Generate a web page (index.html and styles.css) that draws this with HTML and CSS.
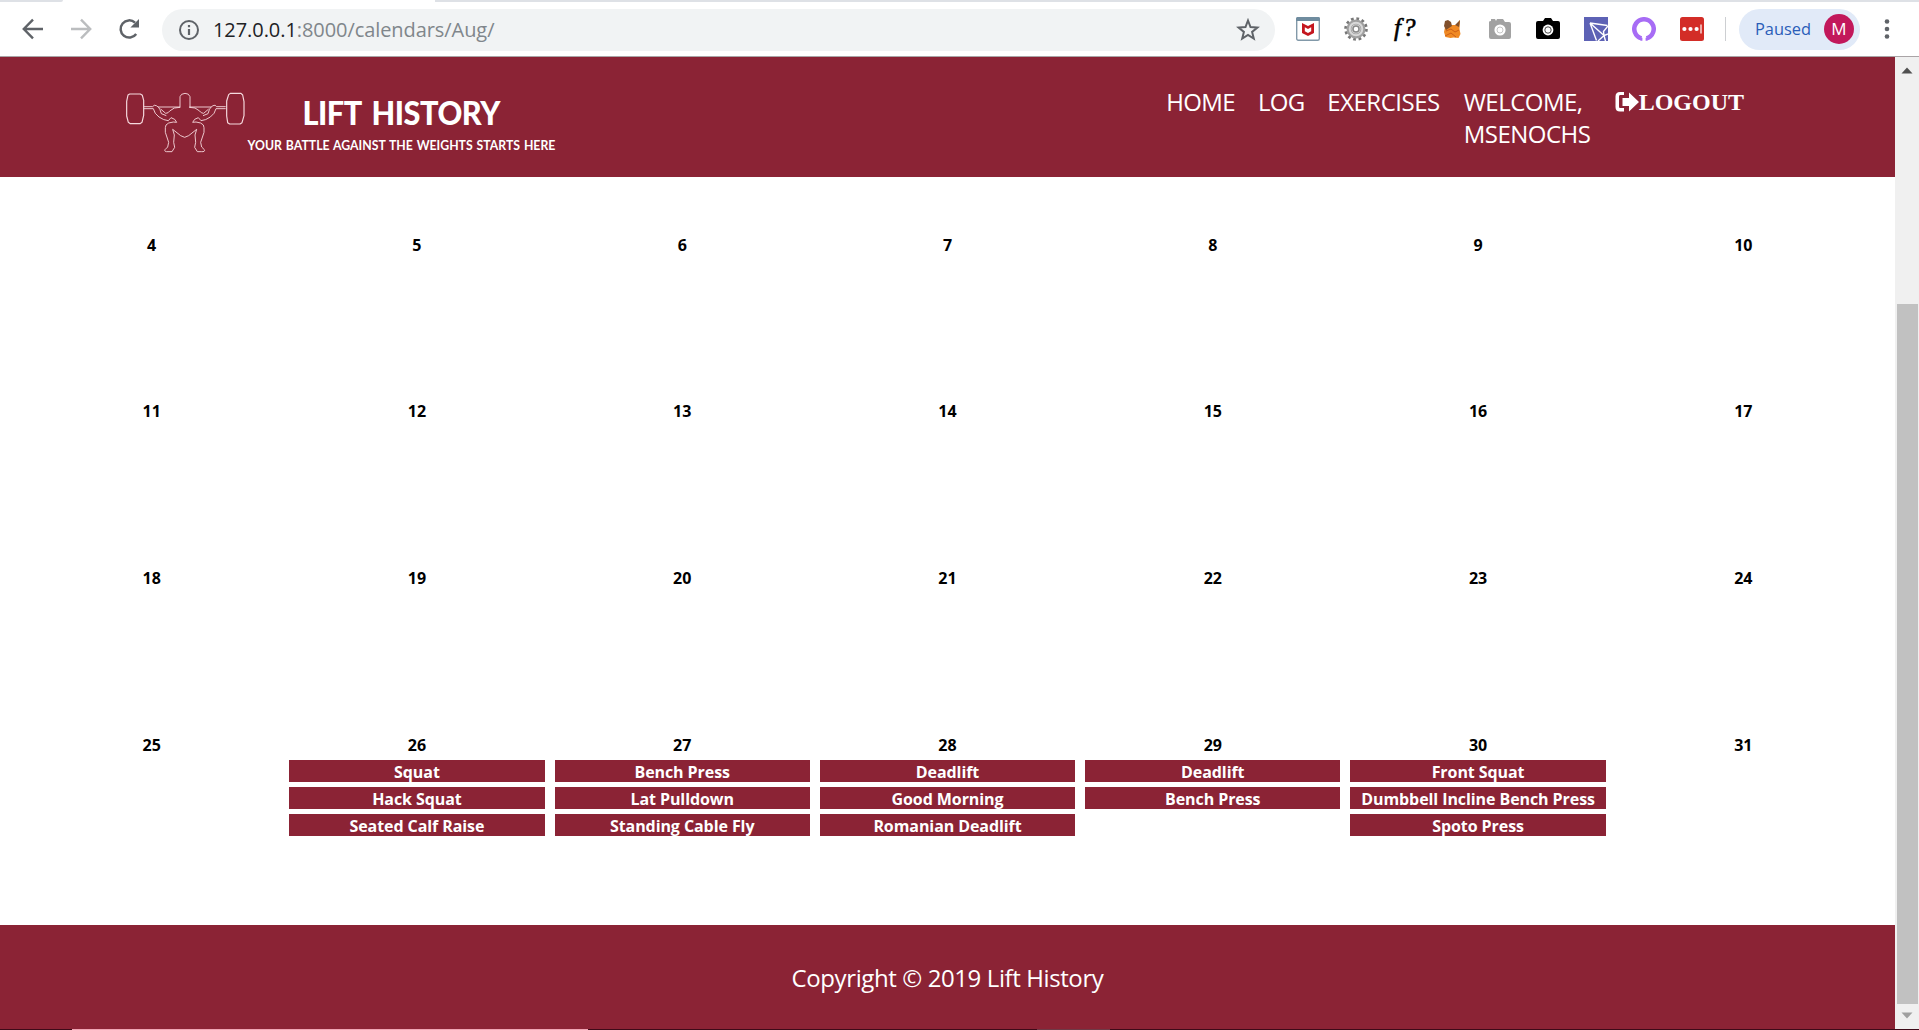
FILE: index.html
```html
<!DOCTYPE html>
<html lang="en">
<head>
<meta charset="utf-8">
<title>Lift History</title>
<link rel="stylesheet" href="styles.css">
</head>
<body>
<div class="browser">
  <div class="tabs"><span class="tab-rest-left"></span><span class="tab-active"></span><span class="tab-rest"></span></div>
  <div class="toolbar">
    <svg class="nav-icon" viewBox="0 0 24 24" fill="none" stroke="#5f6368" stroke-width="2.4"><path d="M22 12H3.5M12 2.7L2.8 12l9.2 9.3"/></svg>
    <svg class="nav-icon" viewBox="0 0 24 24" fill="none" stroke="#bbbdbf" stroke-width="2.4"><path d="M2 12h18.5M12 2.7l9.2 9.3-9.2 9.3"/></svg>
    <svg class="nav-icon" viewBox="0 0 24 24"><path d="M19.2 17A8.6 8.6 0 1 1 18 5.6" fill="none" stroke="#5f6368" stroke-width="2.5"/><path d="M22 2v8.6h-8.6z" fill="#5f6368"/></svg>
    <div class="address">
      <svg class="info" viewBox="0 0 22 22"><circle cx="11" cy="11" r="9" fill="none" stroke="#5f6368" stroke-width="2"/><path d="M11 10v6M11 6v2.2" stroke="#5f6368" stroke-width="2.2"/></svg>
      <span class="url"><b>127.0.0.1</b>:8000/calendars/Aug/</span>
      <svg class="star" viewBox="0 0 24 24"><path d="M12 2.500l2.500 6.500 6.900.5-5.300 4.400 1.700 6.700L12 17l-5.800 3.600 1.700-6.700L2.600 9.500 9.500 9z" fill="none" stroke="#5f6368" stroke-width="2"/></svg>
    </div>
    <div class="extensions">
      <svg viewBox="0 0 24 24"><rect x=".7" y=".7" width="22.6" height="22.6" rx="1.5" fill="#fff" stroke="#8299a9" stroke-width="1.4"/><path d="M0 1.5Q0 0 1.5 0h21Q24 0 24 1.5V4H0z" fill="#6f8c9f"/><path d="M6 6l6 3 6-3v10l-6 3-6-3zM8.800 10.300v4L12 16l3.200-1.700v-4L12 12z" fill="#c4171f" fill-rule="evenodd"/></svg>
      <svg viewBox="0 0 24 24"><circle cx="12" cy="12" r="10.3" fill="none" stroke="#777" stroke-width="3" stroke-dasharray="2.7 2.7"/><circle cx="12" cy="12" r="7" fill="#ddd" stroke="#a0a0a0" stroke-width="5"/><circle cx="12" cy="12" r="6.3" fill="none" stroke="#d8d8d8" stroke-width="2"/><circle cx="12" cy="12" r="3" fill="#fff" stroke="#888" stroke-width="1.5"/></svg>
      <span class="fn">f?</span>
      <svg viewBox="0 0 24 24"><path d="M6 6l5 2h5l4-5-.5 9 1 5-2 4-5-.5-3 .5-5-1-1.500-5z" fill="#f08a24"/><path d="M5 4l3-1 3 2 1 4-6 4-2-4zM20 3l-5 5 4 2z" fill="#81502c"/><path d="M6 14l5-2 4 3 4-2M5 19l6-3 5 4" fill="none" stroke="#cc5f17"/></svg>
      <svg viewBox="0 0 24 24" fill="#a2a2a2"><path d="M1 5Q1 4 3 4V2h4l1 2 1-2h6l2 3h4q2 0 2 2v13q0 2-2 2H3q-2 0-2-2z"/><circle cx="12" cy="13" r="4.400" stroke="#fff" stroke-width="2.400" fill="#fff"/><circle cx="12" cy="13" r="3" stroke="#a2a2a2" stroke-width=".6" fill="#fff"/></svg>
      <svg viewBox="0 0 24 24"><path d="M0 6q0-2 2-2h5l2-3h6l2 3h5q2 0 2 2v14q0 2-2 2H2q-2 0-2-2z"/><circle cx="12" cy="13" r="5.400" fill="#fff"/><circle cx="12" cy="13" r="3.200" stroke="#000" stroke-width=".7" fill="#fff"/></svg>
      <svg viewBox="0 0 24 24"><path fill="#5d62b5" d="M0 0h24v24H0z"/><path d="M6 6l17.500 2.500M6 6l6.500 17.500M6 6l14 12.500M24 17l-4 1.500-6 5.500M20 18.500l1.500 5.500M20 18.500l-.5-4L24 9" fill="none" stroke="#fff" stroke-width="1.400"/></svg>
      <svg viewBox="0 0 24 24" fill="none" stroke="#a76cf5" stroke-width="4.500"><path d="M9.500 23.800v-3M14.500 23.800v-3" stroke-width="1.800"/><path d="M9.500 21.300a9.700 9.700 0 1 1 5 0"/></svg>
      <svg viewBox="0 0 24 24"><rect width="24" height="24" rx="2.500" fill="#d32d27"/><circle cx="4.400" cy="12" r="2.100" fill="#fff"/><circle cx="10.500" cy="12" r="2.100" fill="#fff"/><circle cx="16.600" cy="12" r="2.100" fill="#fff"/><path d="M21 7.500v9" stroke="#fff" stroke-width="1.200"/></svg>
    </div>
    <div class="profile"><span>Paused</span><span class="avatar">M</span></div>
    <svg class="menu" viewBox="0 0 6 22" fill="#5f6368"><circle cx="3" cy="3.500" r="2.300"/><circle cx="3" cy="11" r="2.300"/><circle cx="3" cy="18.500" r="2.300"/></svg>
  </div>
</div>
<div class="viewport">
  <div class="page">
    <header class="site-header">
      <div class="brand">
        <svg class="lifter" viewBox="0 0 390 225" fill="none" stroke="#f6d9de" stroke-width="2.700" stroke-linejoin="round">
          <path stroke-width="3.500" d="M24 30l5-3h32l6 4 4 15v45l-5 21-6 4H31l-6-4-5-19V49zM326 29l5-4h32l5 5 4 20v42l-6 21-6 4h-31l-6-4-3-20V48z"/>
          <path d="M180 68V35q2-9 15-10 12 0 15 10v33"/>
          <g id="half">
            <path d="M71 65h27M71 71h29M114 66h66M122 72l15 13q8 0 12-7l14-9 17-2"/>
            <path d="M98 65q4-7 11-3 8 4 11 12l4 12 15 6M100 71Q103 86 117 96Q131 106 145 107L153 98L164 103L170 112L160 111L146 114L138 120L136 128V142L146 172L143 186L135 194Q132 201 144 200H156L164 187L161 172L163 150L158 133L182 152L194 157"/>
          </g>
          <use href="#half" transform="translate(388 0) scale(-1 1)"/>
        </svg>
        <div class="wordmark"><strong>LIFT HISTORY</strong><small>YOUR BATTLE AGAINST THE WEIGHTS STARTS HERE</small></div>
      </div>
      <nav class="links">
        <a class="home">HOME</a><a class="log">LOG</a><a>EXERCISES</a><a class="welcome">WELCOME, MSENOCHS</a>
        <a class="logout"><svg viewBox="0 0 24 22" fill="#fff"><path d="M9 1v3H5Q4 4 4 5.500v10Q4 17 5 17h4v3.500H5q-4.500 0-4.500-4.500V5.500Q.5 1 5 1zM7.500 7H14V1.500L24 11l-10 9.500V15H7.500z"/></svg>LOGOUT</a>
      </nav>
    </header>
    <main class="calendar">
      <div class="day">4</div><div class="day">5</div><div class="day">6</div><div class="day">7</div><div class="day">8</div><div class="day">9</div><div class="day">10</div>
      <div class="day">11</div><div class="day">12</div><div class="day">13</div><div class="day">14</div><div class="day">15</div><div class="day">16</div><div class="day">17</div>
      <div class="day">18</div><div class="day">19</div><div class="day">20</div><div class="day">21</div><div class="day">22</div><div class="day">23</div><div class="day">24</div>
      <div class="day">25</div>
      <div class="day">26<a class="lift">Squat</a><a class="lift">Hack Squat</a><a class="lift">Seated Calf Raise</a></div>
      <div class="day">27<a class="lift">Bench Press</a><a class="lift">Lat Pulldown</a><a class="lift">Standing Cable Fly</a></div>
      <div class="day">28<a class="lift">Deadlift</a><a class="lift">Good Morning</a><a class="lift">Romanian Deadlift</a></div>
      <div class="day">29<a class="lift">Deadlift</a><a class="lift">Bench Press</a></div>
      <div class="day">30<a class="lift">Front Squat</a><a class="lift">Dumbbell Incline Bench Press</a><a class="lift">Spoto Press</a></div>
      <div class="day">31</div>
    </main>
    <footer class="site-footer">Copyright © 2019 Lift History</footer>
  </div>
  <div class="scrollbar">
    <svg class="arrow" viewBox="0 0 12 7"><path d="M6 .5l5.500 6H.5z" fill="#505050"/></svg>
    <div class="thumb"></div>
    <svg class="arrow" viewBox="0 0 12 7"><path d="M6 6.500L.5.500h11z" fill="#a0a0a0"/></svg>
  </div>
</div>
<div class="taskbar-edge"><span class="search"></span><span class="app"></span></div>
</body>
</html>
```
FILE: styles.css
```css
* { box-sizing: border-box; }
body {
  margin: 0;
  height: 1030px;
  display: flex;
  flex-direction: column;
  overflow: hidden;
  background: #fff;
  font-family: "Open Sans", "Noto Sans", sans-serif;
}
svg { display: block; flex: none; }

/* Browser chrome */
.browser { height: 57px; flex: none; border-bottom: 1px solid #a9a4a6; }
.tabs { display: flex; height: 2px; }
.tab-rest-left { width: 63px; background: #dee1e6; border-bottom-right-radius: 2px; }
.tab-active { width: 372px; }
.tab-rest { flex: 1; background: #dee1e6; }
.toolbar { display: flex; align-items: center; height: 54px; padding-left: 21px; }
.nav-icon { width: 24px; height: 24px; margin-right: 24px; }
.nav-icon:nth-child(3) { margin-right: 21px; }
.address {
  display: flex;
  align-items: center;
  width: 1113px;
  height: 42px;
  margin-top: 2px;
  padding: 0 15px 0 16px;
  border-radius: 21px;
  background: #f1f3f4;
}
.info { width: 22px; height: 22px; }
.url { flex: 1; margin-left: 13px; font-size: 20px; letter-spacing: -.07px; line-height: 42px; color: #80868b; }
.url b { font-weight: 400; color: #202124; }
.star { width: 24px; height: 24px; }
.extensions { display: flex; align-items: center; gap: 24px; margin-left: 21px; padding-right: 21px; border-right: 1px solid #cdcfd2; height: 24px; }
.extensions svg, .fn { width: 24px; height: 24px; }
.fn { font: italic 400 25px/21px "Liberation Serif", serif; white-space: nowrap; padding-left: 2px; letter-spacing: 2px; -webkit-text-stroke: .6px #000; }
.profile {
  display: flex;
  align-items: center;
  justify-content: space-between;
  width: 121px;
  height: 41px;
  margin-left: 13px;
  padding: 0 6px 0 16px;
  border-radius: 21px;
  background: #e1eaf8;
  color: #2a5db8;
  font-size: 16.4px;
}
.profile span:first-child { margin-top: -1px; }
.avatar { width: 30px; height: 30px; border-radius: 50%; background: #c2185b; color: #fff; font-size: 17px; line-height: 30px; text-align: center; }
.menu { width: 6px; height: 22px; margin-left: 24px; }

/* Page */
.viewport { display: flex; flex: 1; min-height: 0; }
.page { width: 1895px; display: flex; flex-direction: column; }
.site-header { display: flex; justify-content: space-between; height: 120px; flex: none; background: #8b2335; color: #fff; padding: 28px 151px 0 120px; }
.brand { display: flex; }
.lifter { width: 130px; height: 75px; }
.wordmark { display: flex; flex-direction: column; align-items: center; width: 310px; margin-left: -4px; padding-top: 10px; font-family: Lato, sans-serif; font-weight: 700; white-space: nowrap; }
.wordmark strong { font-size: 33px; line-height: 34px; letter-spacing: -.5px; word-spacing: 4px; transform: scaleX(.93); }
.wordmark small { margin-top: 8px; font-size: 13.2px; line-height: 16px; word-spacing: 1px; transform: scaleX(.93); }
.links { display: flex; gap: 24px; padding-top: 1px; font-size: 24px; line-height: 32px; letter-spacing: -.5px; }
.home { margin-right: -1px; }
.log { margin-right: -1px; letter-spacing: -.8px; }
.home { letter-spacing: -.6px; }
.welcome { width: 127px; }
.logout { display: flex; font-family: "Liberation Serif", serif; font-weight: 700; letter-spacing: 0; }
.logout svg { width: 24px; height: 22px; margin-top: 5px; }

.calendar {
  display: grid;
  grid-template-columns: repeat(7, 1fr);
  grid-auto-rows: 166.55px;
  height: 748px;
  flex: none;
  padding: 55.9px 19px 0;
}
.day { display: flex; flex-direction: column; padding: 0 5px; text-align: center; font-size: 16px; font-weight: 700; line-height: 24px; }
.lift { height: 22px; margin: 3px 0 2px; line-height: 24px; background: #8b2335; color: #fff; letter-spacing: -.08px; white-space: nowrap; }
.lift + .lift { margin-top: 3px; }
.site-footer { flex: 1; background: #8b2335; color: #fff; text-align: center; font-size: 24px; line-height: 105px; letter-spacing: -.4px; }

.scrollbar { display: flex; flex-direction: column; align-items: center; justify-content: space-between; width: 24px; padding: 10px 0; background: #f0f0f0; }
.arrow { width: 12px; height: 7px; }
.thumb { width: 21px; height: 700px; margin-top: 221px; background: #c1c1c1; }

.taskbar-edge { display: flex; height: 1px; flex: none; background: #3d0a18; }
.search { width: 516px; margin-left: 72px; background: #f0a5b4; }
.app { width: 73px; margin-left: 449px; background: #6f3a47; }
```
